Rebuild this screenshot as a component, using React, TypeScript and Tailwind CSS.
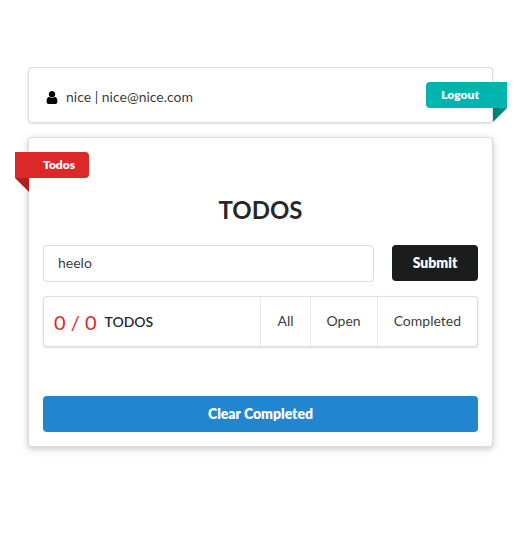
import { useState } from 'react';

const UserIcon = () => (
  <svg viewBox="0 128 1280 1536" className="h-[13px] w-3 fill-black" aria-hidden="true">
    <path d="M1280 1399q0 109-62.500 187t-150.500 78h-854q-88 0-150.500-78t-62.500-187q0-85 8.500-160.500t31.500-152 58.500-131 94-89 134.500-34.500q131 128 313 128t313-128q76 0 134.500 34.500t94 89 58.500 131 31.500 152 8.500 160.500zm-256-887q0 159-112.500 271.500t-271.500 112.500-271.500-112.500-112.500-271.500 112.500-271.500 271.500-112.500 271.500 112.500 112.500 271.500z" />
  </svg>
);

export default function App() {
  const [todo, setTodo] = useState('heelo');

  return (
    <main className="flex flex-col gap-[14px] pt-[67px] pr-[37px] pb-7 pl-7 font-['Lato',sans-serif] text-sm leading-5 text-black/87">
      <header className="flex h-14 items-start justify-between rounded border border-[#22242626] bg-white pt-[14px] pl-[17px] shadow-[0_1px_2px_0_#22242626]">
        <p className="flex items-center gap-2 pt-[5px]">
          <UserIcon />
          <span className="text-black/80">nice | nice@nice.com</span>
        </p>
        <button
          type="button"
          className="relative -mr-[15px] h-[26px] rounded-l bg-[#00b5ad] pr-7 pl-[15px] text-xs leading-4 font-extrabold text-white"
        >
          Logout
          <span className="absolute top-full right-0 size-[14px] bg-[#00827c] [clip-path:polygon(0_0,100%_0,0_100%)]" />
        </button>
      </header>

      <section className="rounded border border-[#22242626] bg-white p-[14px] shadow-[0_2px_4px_0_#2224261f,0_2px_10px_0_#22242626]">
        <h2 className="relative -ml-7 flex h-[26px] w-fit items-center rounded-r bg-[#db2828] pr-[14px] pl-7 text-xs leading-4 font-extrabold text-white">
          Todos
          <span className="absolute top-full left-0 size-[14px] bg-[#b21e1e] [clip-path:polygon(0_0,100%_0,100%_100%)]" />
        </h2>

        <h1 className="mt-4 text-center text-2xl leading-8 font-bold">TODOS</h1>

        <form className="mt-[19px] flex gap-[18px]" onSubmit={(e) => e.preventDefault()}>
          <input
            aria-label="New todo"
            value={todo}
            onChange={(e) => setTodo(e.target.value)}
            className="h-[37px] min-w-0 flex-1 rounded border border-[#22242626] bg-white px-[14px] pb-[2px] text-black/80 outline-none"
          />
          <button type="submit" className="h-9 min-w-[86px] rounded bg-[#1b1c1d] px-5 font-extrabold text-white">
            Submit
          </button>
        </form>

        <div className="mt-[14px] flex h-[51px] items-stretch rounded border border-[#22242626] bg-white shadow-[0_1px_2px_0_#22242626]">
          <p className="flex flex-1 items-center gap-2 pl-[10px]">
            <span className="text-xl leading-6 text-[#db2828]">0 / 0</span>
            <span className="font-semibold">TODOS</span>
          </p>
          <nav className="flex text-black/80" aria-label="Filter todos">
            <button type="button" className="border-l border-[#2224261a] px-4 pb-[2px]">All</button>
            <button type="button" className="border-l border-[#2224261a] px-4 pb-[2px]">Open</button>
            <button type="button" className="border-l border-[#2224261a] px-4 pb-[2px]">Completed</button>
          </nav>
        </div>

        <button type="button" className="mt-[49px] block h-9 w-full rounded bg-[#2185d0] font-extrabold text-white">
          Clear Completed
        </button>
      </section>
    </main>
  );
}
